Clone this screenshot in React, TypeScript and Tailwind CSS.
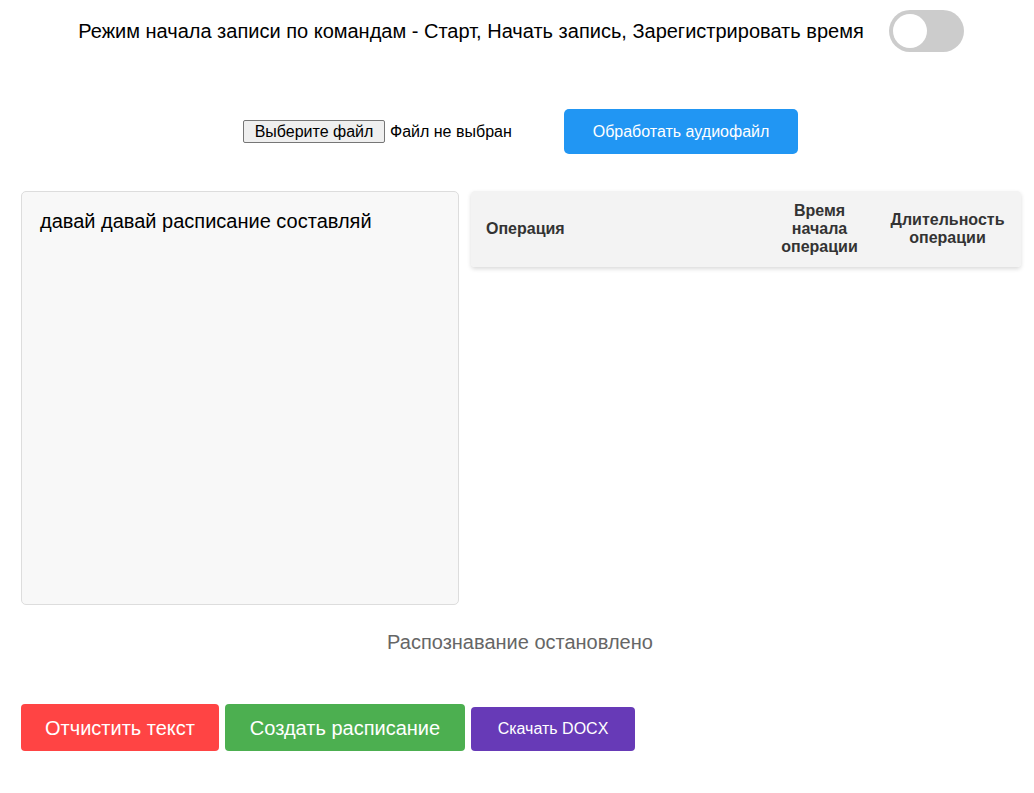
import { useState } from 'react';

// Заголовки таблицы расписания
const columns = [
  { key: 'op', label: 'Операция', className: 'w-[294px] text-left' },
  { key: 'start', label: 'Время начала операции', className: 'w-[109px] text-center' },
  { key: 'dur', label: 'Длительность операции', className: 'w-[147px] text-center' },
];

export default function App() {
  const [commandMode, setCommandMode] = useState(false);
  const [text] = useState('давай давай расписание составляй');

  return (
    <div className="min-h-screen bg-white text-black font-['Liberation_Sans',Arial,sans-serif]">
      {/* Режим команд */}
      <div className="flex items-center justify-center gap-[25px] pt-[10px] pl-[8px]">
        <span className="text-[20px] leading-[24px] whitespace-nowrap">
          Режим начала записи по командам - Старт, Начать запись, Зарегистрировать время
        </span>
        <button
          onClick={() => setCommandMode(!commandMode)}
          className={`relative shrink-0 w-[75px] h-[42px] rounded-full ${commandMode ? 'bg-[#2196f3]' : 'bg-[#cccccc]'}`}
        >
          <span
            className={`absolute top-[4px] w-[34px] h-[34px] rounded-full bg-white ${commandMode ? 'left-[37px]' : 'left-[4px]'}`}
          />
        </button>
      </div>

      {/* Загрузка аудио */}
      <div className="flex items-center justify-center gap-[47px] mt-[57px] pl-[7px]">
        <div className="flex items-center gap-[5px]">
          <span className="h-[23px] w-[142px] flex items-center justify-center bg-[#efefef] border border-[#767676] rounded-[2px] text-[16px]">
            Выберите файл
          </span>
          <span className="w-[127px] text-[16px] whitespace-nowrap">Файл не выбран</span>
        </div>
        <button className="h-[45px] w-[234px] rounded-[5px] bg-[#2196f3] text-white text-[16px]">
          Обработать аудиофайл
        </button>
      </div>

      {/* Текст и таблица */}
      <div className="flex items-start gap-[12px] mt-[37px] pl-[21px]">
        <div className="w-[438px] h-[414px] bg-[#f8f8f8] border border-[#dddddd] rounded-[5px] px-[18px] py-[17px] text-[20px] leading-[24px]">
          {text}
        </div>
        <table className="w-[550px] border-collapse rounded-[4px] overflow-hidden shadow-[0_2px_4px_rgba(0,0,0,0.15)]">
          <thead>
            <tr className="bg-[#f3f3f3]">
              {columns.map((c) => (
                <th
                  key={c.key}
                  className={`${c.className} px-[15px] py-[11px] text-[16px] leading-[18px] font-bold text-[#333333] align-middle`}
                >
                  {c.label}
                </th>
              ))}
            </tr>
          </thead>
          <tbody />
        </table>
      </div>

      <p className="mt-[26px] text-center pl-[6px] text-[20px] leading-[23px] text-[#666666]">
        Распознавание остановлено
      </p>

      {/* Кнопки */}
      <div className="flex items-end gap-[6px] mt-[50px] pl-[21px]">
        <button className="h-[47px] w-[198px] rounded-[4px] bg-[#ff4444] text-white text-[20px]">
          Отчистить текст
        </button>
        <button className="h-[47px] w-[240px] rounded-[4px] bg-[#4caf50] text-white text-[20px]">
          Создать расписание
        </button>
        <button className="h-[44px] w-[164px] rounded-[4px] bg-[#673ab7] text-white text-[16px]">
          Скачать DOCX
        </button>
      </div>
    </div>
  );
}
